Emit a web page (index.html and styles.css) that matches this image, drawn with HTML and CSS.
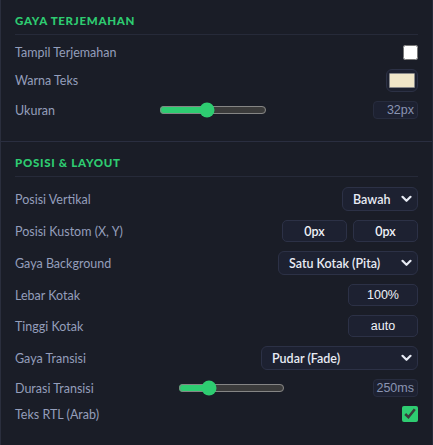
FILE: index.html
```html
<!DOCTYPE html>
<html lang="id">
<head>
<meta charset="utf-8">
<title>Pengaturan</title>
<link rel="stylesheet" href="styles.css">
</head>
<body>
<div class="panel">
  <section class="section">
    <h3 class="section-title">Gaya Terjemahan</h3>
    <div class="rows">
      <div class="row row-check-first">
        <span class="label">Tampil Terjemahan</span>
        <input type="checkbox" class="check check-light">
      </div>
      <div class="row">
        <span class="label">Warna Teks</span>
        <input type="color" class="color" value="#f0e6c8">
      </div>
      <div class="row">
        <span class="label">Ukuran</span>
        <input type="range" class="range range-size" min="10" max="60" value="32">
        <input type="text" class="num" value="32px" readonly>
      </div>
    </div>
  </section>
  <section class="section section-last">
    <h3 class="section-title">Posisi &amp; Layout</h3>
    <div class="rows">
      <div class="row">
        <span class="label">Posisi Vertikal</span>
        <select class="select sel-pos"><option>Bawah</option></select>
      </div>
      <div class="row">
        <span class="label">Posisi Kustom (X, Y)</span>
        <div class="pair">
          <input type="text" class="field field-xy" value="0px">
          <input type="text" class="field field-xy" value="0px">
        </div>
      </div>
      <div class="row">
        <span class="label">Gaya Background</span>
        <select class="select sel-bg"><option>Satu Kotak (Pita)</option></select>
      </div>
      <div class="row">
        <span class="label">Lebar Kotak</span>
        <input type="text" class="field field-box" value="100%">
      </div>
      <div class="row">
        <span class="label">Tinggi Kotak</span>
        <input type="text" class="field field-box" value="auto">
      </div>
      <div class="row">
        <span class="label">Gaya Transisi</span>
        <select class="select sel-tr"><option>Pudar (Fade)</option></select>
      </div>
      <div class="row">
        <span class="label">Durasi Transisi</span>
        <input type="range" class="range range-dur" min="0" max="1000" value="250">
        <input type="text" class="num" value="250ms" readonly>
      </div>
      <div class="row">
        <span class="label">Teks RTL (Arab)</span>
        <input type="checkbox" class="check" checked>
      </div>
    </div>
  </section>
</div>
</body>
</html>
```

FILE: styles.css
```css
html, body {
  margin: 0;
  padding: 0;
  background: #1a1d27;
}

body {
  width: 433px;
  height: 445px;
  overflow: hidden;
  font-family: "Lato", "Noto Sans", sans-serif;
}

.panel {
  box-sizing: border-box;
  width: 433px;
  min-height: 445px;
  border-left: 1px solid #2a2e3d;
  border-right: 1px solid #252938;
}

.section {
  padding: 14px 14px 22px 14px;
  border-bottom: 1px solid #2a2e40;
}

.section-last {
  padding-bottom: 26px;
}

.section-title {
  margin: 0 0 10px 0;
  padding: 0 0 6px 0;
  height: 14px;
  line-height: 14px;
  font-size: 11.5px;
  font-weight: 900;
  letter-spacing: 0.7px;
  text-transform: uppercase;
  color: #2ecc71;
  border-bottom: 1px solid #262a39;
}

.rows {
  display: flex;
  flex-direction: column;
  gap: 9px;
}

.row {
  display: flex;
  align-items: center;
  justify-content: space-between;
}

.row-check-first {
  height: 15px;
}

.label {
  font-size: 12.5px;
  line-height: 15px;
  color: #949ebb;
  white-space: nowrap;
}

.check {
  width: 16px;
  height: 16px;
  margin: 0;
  accent-color: #2ecc71;
}

.check-light {
  width: 15px;
  height: 15px;
  margin-right: 0;
}

.color {
  box-sizing: border-box;
  width: 32px;
  height: 23px;
  padding: 3px 2px;
  margin: 0;
  background: #1d2130;
  border: 1px solid #2c3145;
  border-radius: 6px;
  cursor: pointer;
}

.color::-webkit-color-swatch-wrapper {
  padding: 0;
}

.color::-webkit-color-swatch {
  border: 1px solid #8a8a8a;
  border-radius: 1px;
}

.range {
  width: 108px;
  height: 16px;
  margin: 0 0 0 auto;
  accent-color: #2ecc71;
  color-scheme: dark;
}

.range-size {
  margin-right: 106px;
}

.range-dur {
  width: 107px;
  margin-right: 88px;
}

.num {
  box-sizing: border-box;
  width: 45px;
  height: 18px;
  margin: 0;
  padding: 0 3px 0 0;
  background: #1d2131;
  border: 1px solid #272c3e;
  border-radius: 4px;
  color: #8a94b2;
  font-family: "Liberation Sans", Arial, sans-serif;
  font-size: 12.5px;
  text-align: right;
  outline: none;
}

.select {
  appearance: none;
  -webkit-appearance: none;
  box-sizing: border-box;
  height: 24px;
  margin: 0;
  padding: 0 22px 0 10px;
  background-color: #1d2131;
  background-image: url("data:image/svg+xml;utf8,<svg xmlns='http://www.w3.org/2000/svg' width='11' height='8' viewBox='0 0 11 8'><path d='M1.5 1.8 L5.5 5.8 L9.5 1.8' fill='none' stroke='%23e6e9f2' stroke-width='2.2' stroke-linecap='round' stroke-linejoin='round'/></svg>");
  background-repeat: no-repeat;
  background-position: right 5px center;
  border: 1px solid #2c3146;
  border-radius: 6px;
  color: #e8ebf4;
  font-family: "Lato", "Noto Sans", sans-serif;
  font-size: 12.5px;
  font-weight: 600;
  outline: none;
}

.sel-pos {
  width: 76px;
}

.sel-bg {
  width: 140px;
}

.sel-tr {
  width: 157px;
}

.pair {
  display: flex;
  gap: 6px;
}

.field {
  box-sizing: border-box;
  height: 22px;
  margin: 0;
  padding: 0;
  background: #1d2131;
  border: 1px solid #2c3146;
  border-radius: 5px;
  color: #f0f2f8;
  font-family: "Liberation Sans", Arial, sans-serif;
  font-size: 12.5px;
  text-align: center;
  outline: none;
}

.field-xy {
  width: 65px;
  font-family: "Lato", "Noto Sans", sans-serif;
  font-weight: 600;
}

.field-box {
  width: 70px;
  height: 22px;
}
```
